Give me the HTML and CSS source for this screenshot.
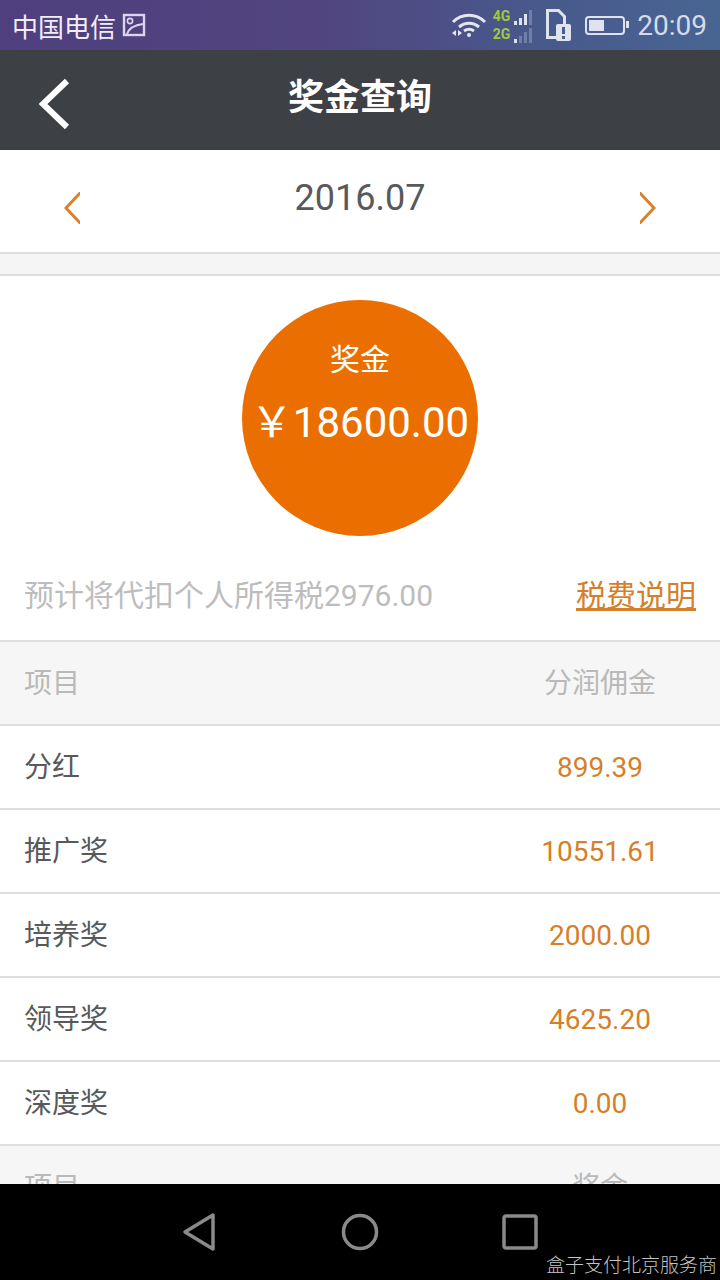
FILE: index.html
```html
<!DOCTYPE html>
<html lang="zh-CN">
<head>
  <meta charset="UTF-8" />
  <title>奖金查询</title>
  <link rel="stylesheet" href="styles.css">
</head>
<body>
  <div class="status-bar">
    <div class="status-left">
      <span class="carrier">中国电信</span>
      <svg class="pic-icon" width="24" height="24" viewBox="0 0 24 24" fill="none" stroke="#ddd3ee" stroke-width="2.4">
        <rect x="2" y="2" width="20" height="20"/>
        <circle cx="8" cy="8" r="2.6" stroke-width="1.6"/>
        <path d="M5 21c2-6 8-9 16-10" stroke-width="2"/>
      </svg>
    </div>
    <div class="status-right">
      <svg width="36" height="26" viewBox="0 0 36 26" fill="none" stroke="#e4e6f2" stroke-width="3">
        <path d="M2 10C11 1 25 1 34 10"/>
        <path d="M8 15c6-5 14-5 20 0"/>
        <path d="M13 19c3-2 7-2 10 0"/>
        <circle cx="18" cy="23" r="2" fill="#e4e6f2" stroke="none"/>
        <path d="M1 21l4-3v6zM11 21l-4-3v6z" fill="#e4e6f2" stroke="none"/>
      </svg>
      <div class="signal">
        <div class="signal-row">
          <span class="net">4G</span>
          <i class="bar b1"></i><i class="bar b2"></i><i class="bar b3"></i><i class="bar b4 dim"></i>
        </div>
        <div class="signal-row">
          <span class="net">2G</span>
          <i class="bar b1"></i><i class="bar b2 dim"></i><i class="bar b3 dim"></i><i class="bar b4 dim"></i>
        </div>
      </div>
      <svg width="25" height="32" viewBox="0 0 25 32" fill="none">
        <path d="M1.5 1.5h11l6 6v21H1.5z" stroke="#dfe3ee" stroke-width="3"/>
        <rect x="10" y="15" width="15" height="17" rx="2" fill="#dfe3ee"/>
        <rect x="16" y="18" width="3" height="7" fill="#47608f"/>
        <rect x="16" y="27" width="3" height="3" fill="#47608f"/>
      </svg>
      <div class="battery"><div class="battery-fill"></div></div>
      <span class="clock">20:09</span>
    </div>
  </div>

  <div class="nav-bar">
    <svg class="back" width="34" height="54" viewBox="0 0 34 54" fill="none" stroke="#fff" stroke-width="6">
      <path d="M30 4L6 27l24 23"/>
    </svg>
    <span class="nav-title">奖金查询</span>
  </div>

  <div class="content">
    <div class="month-row">
      <svg class="arrow" width="16" height="32" viewBox="0 0 16 32" fill="none" stroke="#d9822b" stroke-width="3">
        <path d="M17 0L2 16l15 16"/>
      </svg>
      <span class="month">2016.07</span>
      <svg class="arrow" width="16" height="32" viewBox="0 0 16 32" fill="none" stroke="#d9822b" stroke-width="3">
        <path d="M-1 0l15 16L-1 32"/>
      </svg>
    </div>
    <div class="spacer"></div>

    <div class="summary">
      <div class="circle">
        <span class="circle-label">奖金</span>
        <span class="circle-amount">￥18600.00</span>
      </div>
      <div class="tax-row">
        <span class="tax-text">预计将代扣个人所得税2976.00</span>
        <a class="tax-link">税费说明</a>
      </div>
    </div>

    <div class="row head"><span>项目</span><span class="val">分润佣金</span></div>
    <div class="row"><span>分红</span><span class="val">899.39</span></div>
    <div class="row"><span>推广奖</span><span class="val">10551.61</span></div>
    <div class="row"><span>培养奖</span><span class="val">2000.00</span></div>
    <div class="row"><span>领导奖</span><span class="val">4625.20</span></div>
    <div class="row"><span>深度奖</span><span class="val">0.00</span></div>
    <div class="row head"><span>项目</span><span class="val">奖金</span></div>
  </div>

  <div class="sys-nav">
    <svg width="36" height="40" viewBox="0 0 36 40" fill="none" stroke="#8a8a8a" stroke-width="3.5" stroke-linejoin="round">
      <path d="M31 3v34L3 20z"/>
    </svg>
    <svg width="40" height="40" viewBox="0 0 40 40" fill="none" stroke="#8a8a8a" stroke-width="3.5">
      <circle cx="20" cy="20" r="16.5"/>
    </svg>
    <svg width="36" height="36" viewBox="0 0 36 36" fill="none" stroke="#8a8a8a" stroke-width="3.5" stroke-linejoin="round">
      <rect x="2" y="2" width="32" height="32" rx="2"/>
    </svg>
    <span class="watermark">盒子支付北京服务商</span>
  </div>
</body>
</html>
```

FILE: styles.css
```css
body {
  margin: 0;
  width: 720px;
  height: 1280px;
  overflow: hidden;
  display: flex;
  flex-direction: column;
  font-family: Roboto, "Noto Sans CJK SC", sans-serif;
  background-color: #fff;
}
.status-bar {
  height: 50px;
  flex: none;
  display: flex;
  justify-content: space-between;
  align-items: center;
  padding: 0 13px 0 12px;
  box-sizing: border-box;
  background: linear-gradient(90deg, #4f3f7e 0%, #51457f 45%, #48598c 75%, #486592 100%);
}
.status-left, .status-right {
  display: flex;
  align-items: center;
}
.carrier {
  font-size: 26px;
  color: #f1edf8;
}
.pic-icon {
  margin-left: 6px;
}
.status-right svg {
  flex: none;
}
.signal {
  margin-left: 6px;
  margin-right: 12px;
  width: 41px;
}
.signal-row {
  display: flex;
  align-items: flex-end;
  height: 18px;
  gap: 2px;
}
.net {
  font-size: 14px;
  line-height: 18px;
  font-weight: 700;
  color: #9ccb3c;
  width: 19px;
}
.bar {
  width: 3px;
  background-color: #dfe3ee;
}
.bar.dim {
  background-color: #6f7fa6;
}
.b1 { height: 4px; }
.b2 { height: 7px; }
.b3 { height: 11px; }
.b4 { height: 15px; }
.battery {
  width: 32px;
  height: 11px;
  margin-left: 14px;
  margin-right: 12.5px;
  border: 2.5px solid #dfe3ee;
  border-radius: 4px;
  position: relative;
  display: flex;
  padding: 2px;
}
.battery::after {
  content: "";
  position: absolute;
  right: -6px;
  top: 3px;
  width: 3px;
  height: 7px;
  background-color: #dfe3ee;
}
.battery-fill {
  width: 15px;
  background-color: #dfe3ee;
}
.clock {
  font-size: 28px;
  color: #d3dcea;
}
.nav-bar {
  height: 100px;
  flex: none;
  box-sizing: border-box;
  padding-bottom: 12px;
  background-color: #3d4044;
  display: flex;
  align-items: center;
  justify-content: center;
  position: relative;
}
.back {
  position: absolute;
  left: 37px;
  top: 27px;
}
.nav-title {
  font-size: 36px;
  font-weight: 700;
  color: #fff;
}
.content {
  flex: 1;
  overflow: hidden;
}
.month-row {
  height: 102px;
  display: flex;
  justify-content: space-between;
  padding: 0 64px;
  border-bottom: 2px solid #dedede;
}
.arrow {
  margin-top: 42px;
}
.month {
  font-size: 36px;
  color: #58595b;
  line-height: 96px;
}
.spacer {
  height: 20px;
  background-color: #f5f5f5;
  border-bottom: 2px solid #dedede;
}
.summary {
  height: 364px;
  display: flex;
  flex-direction: column;
  align-items: center;
  border-bottom: 2px solid #dedede;
}
.circle {
  width: 236px;
  height: 236px;
  margin-top: 24px;
  border-radius: 50%;
  background-color: #ea6f00;
  color: #fff;
  display: flex;
  flex-direction: column;
  align-items: center;
}
.circle-label {
  font-size: 30px;
  line-height: 44px;
  margin-top: 38px;
}
.circle-amount {
  font-size: 42px;
  line-height: 50px;
  margin-top: 16px;
  white-space: nowrap;
}
.tax-row {
  align-self: stretch;
  display: flex;
  justify-content: space-between;
  align-items: center;
  padding: 0 24px;
  margin-top: 39px;
  font-size: 30px;
  line-height: 42px;
}
.tax-text {
  color: #bdbdbd;
}
.tax-link {
  color: #d67f2a;
  text-decoration: underline;
}
.row {
  height: 82px;
  display: flex;
  align-items: flex-start;
  line-height: 83px;
  padding-left: 24px;
  border-bottom: 2px solid #dedede;
  font-size: 28px;
  color: #58595b;
}
.row span:first-child {
  flex: 1;
}
.val {
  width: 240px;
  text-align: center;
  color: #d67f2a;
}
.row.head {
  background-color: #f6f6f6;
  color: #b9b9b9;
}
.row.head .val {
  color: #b9b9b9;
}
.sys-nav {
  height: 96px;
  flex: none;
  background-color: #000;
  display: flex;
  align-items: center;
  justify-content: center;
  gap: 122px;
  position: relative;
}
.watermark {
  position: absolute;
  right: 3px;
  bottom: 2px;
  font-size: 19px;
  line-height: 24px;
  font-weight: 300;
  color: #c4c4c4;
  white-space: nowrap;
}
```
